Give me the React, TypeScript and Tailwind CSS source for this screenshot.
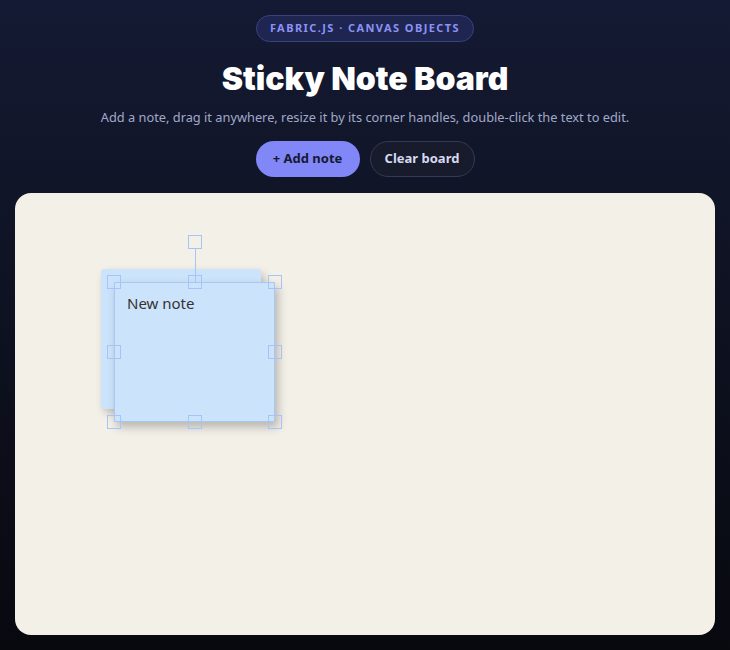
import React from 'react';

const handles = [
  { x: 0, y: 0 }, { x: 80.5, y: 0 }, { x: 161, y: 0 },
  { x: 0, y: 70 }, { x: 161, y: 70 },
  { x: 0, y: 140 }, { x: 80.5, y: 140 }, { x: 161, y: 140 },
];

export default function App() {
  return (
    <div
      className="min-h-screen w-full flex flex-col items-center bg-gradient-to-b from-[#141a33] to-[#08090f] px-[15px] pb-[15px]"
      style={{ fontFamily: '"Noto Sans", "Open Sans", sans-serif' }}
    >
      {/* Header */}
      <div className="mt-[15px] h-[27px] px-[13px] flex items-center rounded-full border border-[#3a4280] bg-[#1e2550] text-[11px] font-bold tracking-[0.13em] text-[#8b93f5]">
        FABRIC.JS · CANVAS OBJECTS
      </div>
      <h1 className="mt-[17px] text-[32px] leading-[40px] font-black text-white" style={{ fontFamily: 'Inter, "Noto Sans", sans-serif' }}>
        Sticky Note Board
      </h1>
      <p className="mt-[9px] text-[12.8px] leading-[18px] text-[#a1a9c9]">
        Add a note, drag it anywhere, resize it by its corner handles, double-click the text to edit.
      </p>
      <div className="mt-[15px] flex gap-[10px]">
        <button className="h-[36px] w-[104px] rounded-full bg-[#8187f7] text-[13px] font-bold text-[#141a33]">
          + Add note
        </button>
        <button className="h-[36px] w-[105px] rounded-full border border-[#353a52] bg-[#171b2b] text-[13px] font-bold text-[#d6daf0]">
          Clear board
        </button>
      </div>

      {/* Board */}
      <div className="relative mt-[16px] w-full h-[442px] rounded-[16px] bg-[#f3f0e8] overflow-hidden">
        {/* back note */}
        <div className="absolute left-[86px] top-[76px] w-[160px] h-[140px] rounded-[4px] bg-[#cce4fb] shadow-[3px_4px_8px_rgba(0,0,0,0.22)]" />
        <div className="absolute left-[99px] top-[91px] w-px h-[10px] bg-[#555]" />
        {/* front note */}
        <div className="absolute left-[99px] top-[89px] w-[161px] h-[140px] bg-[#cce4fb] shadow-[3px_5px_9px_rgba(0,0,0,0.25)] border border-[#a9c6f5]">
          <span className="absolute left-[12px] top-[10px] text-[15px] text-[#333] leading-[20px]">New note</span>
        </div>
        {/* rotation handle */}
        <div className="absolute left-[179.5px] top-[55px] w-px h-[34px] bg-[#a6c4fa]" />
        <div className="absolute left-[173px] top-[42px] w-[14px] h-[14px] border border-[#a6c4fa]" />
        {handles.map((h, i) => (
          <div
            key={i}
            className="absolute w-[14px] h-[14px] border border-[#a6c4fa]"
            style={{ left: 99 + h.x - 7, top: 89 + h.y - 7 }}
          />
        ))}
      </div>
    </div>
  );
}
